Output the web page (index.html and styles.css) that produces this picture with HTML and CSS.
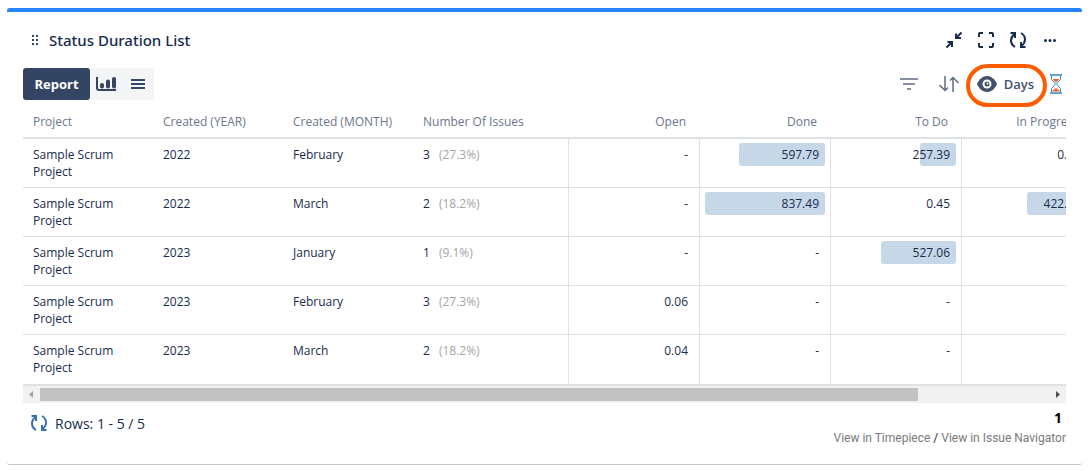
FILE: index.html
```html
<!DOCTYPE html>
<html lang="en">
<head>
<meta charset="utf-8">
<title>Status Duration List</title>
<link rel="stylesheet" href="styles.css">
</head>
<body>
<main class="gadget">
  <header class="gadget-header">
    <svg class="drag" width="8" height="12" viewBox="0 0 8 12" aria-hidden="true"><path fill="#344563" d="M1 1h2v2H1zM5 1h2v2H5zM1 5h2v2H1zM5 5h2v2H5zM1 9h2v2H1zM5 9h2v2H5z"/></svg>
    <h1 class="title">Status Duration List</h1>
    <div class="actions">
      <button class="icon-button" aria-label="Minimize"><svg width="18" height="18" viewBox="0 0 18 18" fill="none" stroke="#172b4d" stroke-width="2"><path d="M16.500 1.500l-5.500 5.500M11 2.500v4.500h5M1.500 16.500l5.500-5.500M2.500 11h4.500v5"/></svg></button>
      <button class="icon-button" aria-label="Full screen"><svg width="18" height="18" viewBox="0 0 18 18" fill="none" stroke="#172b4d" stroke-width="2"><path d="M2 6V3q0-1 1-1h3M12 2h3q1 0 1 1v3M16 12v3q0 1-1 1h-3M6 16H3q-1 0-1-1v-3"/></svg></button>
      <button class="icon-button" aria-label="Refresh"><svg width="18" height="18" viewBox="0 0 18 18" fill="none" stroke="#172b4d" stroke-width="2"><path d="M6 16C1 13 .5 7 5.500 3M1.500 2H6v5M12 2c5 3 5.500 9 .5 13M16.500 16H12v-5"/></svg></button>
      <button class="icon-button" aria-label="More"><svg width="18" height="18" viewBox="0 0 18 18" fill="#172b4d"><circle cx="4.500" cy="9.500" r="1.500"/><circle cx="9" cy="9.500" r="1.500"/><circle cx="13.500" cy="9.500" r="1.500"/></svg></button>
    </div>
  </header>

  <div class="toolbar">
    <div class="views">
      <button class="view view-active">Report</button>
      <button class="view" aria-label="Chart"><svg width="20" height="16" viewBox="0 0 20 16"><path d="M1 1v11q0 2 2 2h17" fill="none" stroke="#344563" stroke-width="2"/><path d="M6 9v1.500M12 5.500v5M18 3v7.500" stroke="#344563" stroke-width="4" stroke-linecap="round"/></svg></button>
      <button class="view" aria-label="List"><svg width="14" height="12" viewBox="0 0 14 12"><path d="M0 2h14M0 6h14M0 10h14" stroke="#344563" stroke-width="2"/></svg></button>
    </div>
    <div class="tools">
      <button class="tool tool-filter" aria-label="Filter"><svg width="18" height="14" viewBox="0 0 18 14"><path d="M0 2h18M3 7h12M7 12h4" stroke="#5e6c84" stroke-width="1.500"/></svg></button>
      <button class="tool tool-sort" aria-label="Sort"><svg width="20" height="18" viewBox="0 0 20 18" fill="none" stroke="#5e6c84" stroke-width="1.500"><path d="M6 1v14.500M.5 10L6 15.500l3-3M14 17V2.500M11 5.500l3-3L19.500 8"/></svg></button>
      <button class="tool tool-unit"><svg width="20" height="16" viewBox="0 0 20 16"><path fill="#42526e" d="M0 8C2 3 6 0 10 0s8 3 10 8c-2 5-6 8-10 8S2 13 0 8z"/><circle cx="10" cy="8" r="4.500" fill="#fff"/><circle cx="10" cy="8" r="2.500" fill="#42526e"/><circle cx="10.500" cy="7.500" r="1" fill="#fff"/></svg><span>Days</span></button>
      <button class="tool" aria-label="Duration"><svg width="14" height="20" viewBox="0 0 14 20"><path d="M2.500 2v3.500L6.500 10l-4 4.500V18M11.500 2v3.500L7.500 10l4 4.500V18" fill="none" stroke="#2f86c6"/><path d="M3.500 5h7L7 8.500zM3.500 17.500v-1L7 14l3.500 2.500v1z" fill="#f0652a"/><path d="M1 1h12M1 19h12" fill="none" stroke="#2f86c6" stroke-width="1.500"/></svg></button>
    </div>
  </div>

  <div class="report">
    <table class="grid">
      <colgroup><col class="c-group"><col class="c-group"><col class="c-group"><col class="c-count"><col class="c-time"><col class="c-time"><col class="c-time"><col class="c-time"><col class="c-time"></colgroup>
      <thead>
        <tr><th>Project</th><th>Created (YEAR)</th><th>Created (MONTH)</th><th>Number Of Issues</th><th class="num">Open</th><th class="num">Done</th><th class="num">To Do</th><th class="num">In Progress</th><td></td></tr>
      </thead>
      <tbody>
        <tr><td>Sample Scrum Project</td><td>2022</td><td>February</td><td>3<span class="share">(27.3%)</span></td><td class="time"><div class="cell">-</div></td><td class="time"><div class="cell"><i class="bar" style="width:86px"></i><span>597.79</span></div></td><td class="time"><div class="cell"><i class="bar" style="width:36px"></i><span>257.39</span></div></td><td class="time"><div class="cell">0.06</div></td><td class="time"></td></tr>
        <tr><td>Sample Scrum Project</td><td>2022</td><td>March</td><td>2<span class="share">(18.2%)</span></td><td class="time"><div class="cell">-</div></td><td class="time"><div class="cell"><i class="bar" style="width:120px"></i><span>837.49</span></div></td><td class="time"><div class="cell">0.45</div></td><td class="time"><div class="cell"><i class="bar" style="width:60px"></i><span>422.06</span></div></td><td class="time"></td></tr>
        <tr><td>Sample Scrum Project</td><td>2023</td><td>January</td><td>1<span class="share">(9.1%)</span></td><td class="time"><div class="cell">-</div></td><td class="time"><div class="cell">-</div></td><td class="time"><div class="cell"><i class="bar" style="width:75px"></i><span>527.06</span></div></td><td class="time"><div class="cell">-</div></td><td class="time"></td></tr>
        <tr><td>Sample Scrum Project</td><td>2023</td><td>February</td><td>3<span class="share">(27.3%)</span></td><td class="time"><div class="cell">0.06</div></td><td class="time"><div class="cell">-</div></td><td class="time"><div class="cell">-</div></td><td class="time"><div class="cell">-</div></td><td class="time"></td></tr>
        <tr><td>Sample Scrum Project</td><td>2023</td><td>March</td><td>2<span class="share">(18.2%)</span></td><td class="time"><div class="cell">0.04</div></td><td class="time"><div class="cell">-</div></td><td class="time"><div class="cell">-</div></td><td class="time"><div class="cell">-</div></td><td class="time"></td></tr>
      </tbody>
    </table>
  </div>
  <div class="scrollbar" aria-hidden="true">
    <svg width="17" height="17" viewBox="0 0 17 17"><path d="M10 5v7L6 8.500z" fill="#a3a3a3"/></svg>
    <div class="track"><div class="thumb"></div></div>
    <svg width="17" height="17" viewBox="0 0 17 17"><path d="M7 5v7l4-3.500z" fill="#505050"/></svg>
  </div>

  <footer class="footer">
    <div class="rows">
      <button class="reload" aria-label="Reload rows"><svg width="18" height="18" viewBox="0 0 18 18" fill="none" stroke="#3572b0" stroke-width="2"><path d="M6 16C1 13 .5 7 5.500 3M1.500 2H6v5M12 2c5 3 5.500 9 .5 13M16.500 16H12v-5"/></svg></button>
      <span>Rows: 1 - 5 / 5</span>
    </div>
    <div class="right">
      <strong class="page">1</strong>
      <div class="links"><a href="#">View in Timepiece</a> / <a href="#">View in Issue Navigator</a></div>
    </div>
  </footer>
</main>
</body>
</html>
```
FILE: styles.css
```css
* { box-sizing: border-box; }
body {
  margin: 8px 8px 6px 7px;
  background: #fff;
  color: #172b4d;
  font: 12px/17px "Open Sans", "Noto Sans", sans-serif;
}
button { margin: 0; padding: 0; border: 0; background: none; color: inherit; font: inherit; cursor: pointer; }
svg { display: block; flex: none; }

.gadget {
  padding: 0 16px 14px;
  border-top: 4px solid #2684ff;
  border-bottom: 1px solid #c1c7d0;
  border-radius: 3px;
  box-shadow: 0 0 0 1px #f0f1f4;
}
.gadget-header { display: flex; align-items: center; height: 56px; padding-left: 8px; }
.title { margin: 0 0 0 10px; font-family: "Noto Sans", sans-serif; font-size: 15px; line-height: 20px; font-weight: 500; }
.actions { display: flex; margin-left: auto; }
.icon-button { display: grid; place-items: center; width: 32px; height: 32px; }

.toolbar { display: flex; justify-content: space-between; height: 32px; }
.views { display: flex; }
.view { display: grid; place-items: center; width: 32px; height: 32px; border-radius: 3px; background: #f4f5f7; }
.view-active { width: 67px; background: #344563; color: #fff; font-size: 13px; font-weight: 700; }
.tools { display: flex; align-items: center; padding-right: 3px; }
.tool { display: flex; align-items: center; }
.tool-filter { margin-right: 21px; }
.tool-unit { position: relative; gap: 7px; margin: 0 15px 0 18px; color: #42526e; font-size: 13px; font-weight: 600; }
.tool-unit::after { content: ""; position: absolute; inset: -12px -13px -14px -11px; border: 4px solid #ff5b00; border-radius: 22px; }

.report { overflow: hidden; padding-top: 7px; }
.grid { width: 1200px; table-layout: fixed; border-collapse: separate; border-spacing: 0; border-bottom: 2px solid #dfe1e6; }
.c-group { width: 130px; }
.c-count { width: 155px; }
.c-time { width: 131px; }
.grid th { height: 32px; padding: 0 10px 2px; text-align: left; color: #6b778c; font-weight: 500; white-space: nowrap; }
.grid th.num { padding-right: 13px; text-align: right; }
.grid thead th, .grid thead td { border-bottom: 2px solid #dfe1e6; }
.grid tbody td { height: 49px; padding: 7px 10px; vertical-align: top; border-bottom: 1px solid #dfe1e6; }
.grid tbody tr:last-child td { border-bottom: 0; }
.grid tbody td.time { padding: 4px 5px 0; border-left: 1px solid #dfe1e6; }
.share { margin-left: 9px; color: #a5a5a5; }
.cell { display: grid; grid-template-areas: "value"; align-items: center; height: 23px; text-align: right; }
.cell > * { grid-area: value; }
.cell > span, .cell:not(:has(span)) { padding-right: 6px; }
.bar { justify-self: end; height: 23px; border-radius: 3px; background: #c6d8e8; }

.scrollbar { display: flex; height: 17px; background: #f1f1f1; }
.track { flex: 1; padding: 2px 0; }
.thumb { width: 87%; height: 13px; background: #c1c1c1; }

.footer { display: flex; justify-content: space-between; padding-top: 6px; }
.rows { display: flex; align-items: center; height: 28px; padding-left: 7px; gap: 7px; font-size: 14px; }
.right { text-align: right; }
.page { display: block; padding-right: 4px; color: #000; font-size: 14px; line-height: 18px; }
.links { font-family: Roboto, sans-serif; font-size: 12px; line-height: 23px; }
.links a { color: #7a7a7a; text-decoration: none; }
```
